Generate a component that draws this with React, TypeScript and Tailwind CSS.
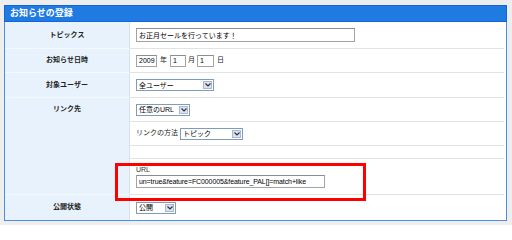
import React from "react";

function Sel({ w, text }: { w: number; text: string }) {
  return (
    <div
      className="flex h-[12px] items-stretch border border-[#7f9db9] bg-white"
      style={{ width: w }}
    >
      <div className="flex flex-1 items-center pl-[2px] text-[7px] leading-none text-black">{text}</div>
      <div className="m-[1px] flex w-[9px] items-center justify-center border border-[#a8b8d8] bg-[#dbe2f0]">
        <svg width="6" height="4" viewBox="0 0 6 4">
          <path d="M0.5 0.5 L3 3 L5.5 0.5" fill="none" stroke="#333" strokeWidth="1.2" />
        </svg>
      </div>
    </div>
  );
}

function Inp({ w, text, cls = "" }: { w: number; text: string; cls?: string }) {
  return (
    <div
      className={"flex h-[12px] items-center border border-[#a0a4aa] border-t-[#8a8e94] bg-white pl-[2px] text-[7px] leading-none text-black whitespace-nowrap overflow-hidden " + cls}
      style={{ width: w }}
    >
      {text}
    </div>
  );
}

function Label({ children, h, last = false }: { children?: React.ReactNode; h: number; last?: boolean }) {
  return (
    <div
      className={"flex w-[125px] shrink-0 items-center justify-center border-r border-[#d5e2f0] bg-[#e8f2fc] text-[7px] font-bold text-[#222] " + (last ? "" : "border-b border-b-[#f5f8fb]")}
      style={{ height: h }}
    >
      {children}
    </div>
  );
}

function Val({ children, h, last = false, cls = "", inCol = false }: { children?: React.ReactNode; h: number; last?: boolean; cls?: string; inCol?: boolean }) {
  return (
    <div
      className={"mr-[2px] flex items-center pl-[6px] " + (inCol ? "shrink-0 " : "flex-1 ") + (last ? "" : "border-b border-[#e2e2e2] ") + cls}
      style={{ height: h }}
    >
      {children}
    </div>
  );
}

export default function App() {
  return (
    <div className="relative h-[225px] w-[512px] overflow-hidden bg-[#eeeeee] pt-[5px] pl-[4px] font-['Liberation_Sans','Noto_Sans_CJK_JP',sans-serif] text-[#222]">
      <div className="w-[503px]">
        <div className="flex h-[17px] items-center border border-[#1466d6] bg-[#1f7be2] pl-[5px] text-[9px] font-bold text-white">
          お知らせの登録
        </div>
        <div className="border-x border-b border-[#4a90e2] bg-white">
          <div className="flex">
            <Label h={27}>トピックス</Label>
            <Val h={27}>
              <Inp w={219} text="お正月セールを行っています！" cls="h-[14px]" />
            </Val>
          </div>
          <div className="flex">
            <Label h={24}>お知らせ日時</Label>
            <Val h={24}>
              <Inp w={21} text="2009" />
              <span className="mx-[3px] text-[7px]">年</span>
              <Inp w={16} text="1" />
              <span className="mx-[2px] text-[7px]">月</span>
              <Inp w={17} text="1" />
              <span className="ml-[3px] text-[7px]">日</span>
            </Val>
          </div>
          <div className="flex">
            <Label h={25}>対象ユーザー</Label>
            <Val h={25}>
              <Sel w={78} text="全ユーザー" />
            </Val>
          </div>
          <div className="flex h-[97px]">
            <div className="flex h-[97px] w-[125px] shrink-0 items-start justify-center border-r border-b border-[#d5e2f0] border-b-[#f5f8fb] bg-[#e8f2fc] pt-[6px] text-[7px] font-bold text-[#222]">
              リンク先
            </div>
            <div className="flex min-w-0 flex-1 flex-col">
              <Val h={24} inCol>
                <Sel w={54} text="任意のURL" />
              </Val>
              <Val h={24} inCol>
                <span className="mr-[2px] text-[7px]">リンクの方法</span>
                <Sel w={63} text="トピック" />
              </Val>
              <Val h={13} inCol />
              <Val h={36} inCol cls="flex-col !items-start justify-center">
                <div className="mb-[2px] text-[7px] leading-none text-[#333]">URL</div>
                <Inp w={189} text="un=true&feature=FC000005&feature_PAL[]=match+like" cls="h-[13px] tracking-[-0.1px]" />
              </Val>
            </div>
          </div>
          <div className="flex">
            <Label h={25} last>公開状態</Label>
            <Val h={25} last>
              <Sel w={40} text="公開" />
            </Val>
          </div>
        </div>
      </div>
      <div className="absolute left-[115px] top-[163px] h-[38px] w-[251px] border-[3px] border-[#ff0000]" />
    </div>
  );
}
